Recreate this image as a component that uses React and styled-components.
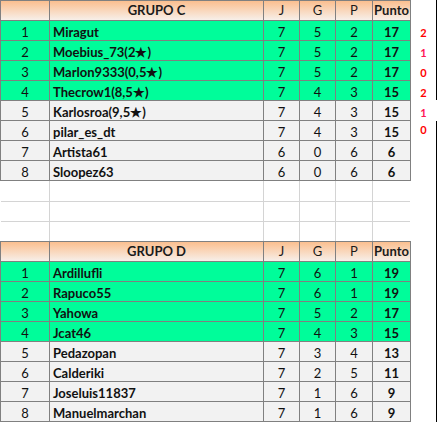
import React from 'react';
import styled, { createGlobalStyle } from 'styled-components';

const GROUPS = [
  {
    title: 'GRUPO C',
    rows: [
      ['Miragut', 7, 5, 2, 17],
      ['Moebius_73(2★)', 7, 5, 2, 17],
      ['Marlon9333(0,5★)', 7, 5, 2, 17],
      ['Thecrow1(8,5★)', 7, 4, 3, 15],
      ['Karlosroa(9,5★)', 7, 4, 3, 15],
      ['pilar_es_dt', 7, 4, 3, 15],
      ['Artista61', 6, 0, 6, 6],
      ['Sloopez63', 6, 0, 6, 6],
    ],
  },
  {
    title: 'GRUPO D',
    rows: [
      ['Ardillufli', 7, 6, 1, 19],
      ['Rapuco55', 7, 6, 1, 19],
      ['Yahowa', 7, 5, 2, 17],
      ['Jcat46', 7, 4, 3, 15],
      ['Pedazopan', 7, 3, 4, 13],
      ['Calderiki', 7, 2, 5, 11],
      ['Joseluis11837', 7, 1, 6, 9],
      ['Manuelmarchan', 7, 1, 6, 9],
    ],
  },
];

const MARKS = [2, 1, 0, 2, 1, 0];

const COLUMNS = '48px 213px 35px 35px 36px 37px';

const GlobalStyle = createGlobalStyle`
  body {
    margin: 0;
    background: #fff;
    font-family: Lato, "Liberation Sans", Arial, sans-serif;
  }
`;

const Sheet = styled.div`
  display: flex;
  align-items: flex-start;
  width: 437px;
  height: 422px;
  overflow: hidden;
`;

const Standings = styled.div`
  display: flex;
  flex-direction: column;
  width: 411px;
`;

const Board = styled.div`
  display: grid;
  grid-template-columns: ${COLUMNS};
  grid-auto-rows: 19px;
  gap: 1px;
  background: #808080;
  border: 1px solid #808080;
`;

const HeadCell = styled.div`
  display: flex;
  align-items: flex-end;
  justify-content: center;
  padding-bottom: 2px;
  background: linear-gradient(#fbbf8f, #f7efe9);
  color: #1b1b1b;
  font-size: 13px;
  line-height: 15px;
  font-weight: ${({ $bold }) => ($bold ? 700 : 400)};
`;

const Cell = styled.div`
  display: flex;
  align-items: flex-end;
  justify-content: ${({ $left }) => ($left ? 'flex-start' : 'center')};
  padding-left: ${({ $left }) => ($left ? '3px' : '0')};
  background: ${({ $top }) => ($top ? '#00fd9a' : '#f2f2f2')};
  color: #111;
  font-size: 13px;
  line-height: 15px;
  font-weight: ${({ $bold }) => ($bold ? 700 : 400)};
  white-space: nowrap;
`;

const Blank = styled.div`
  display: grid;
  grid-template-columns: ${COLUMNS};
  grid-template-rows: 20px 19px 19px;
  gap: 1px;
  margin: 0 1px;
  background: #d4d4d4;
`;

const BlankCell = styled.div`
  background: #fff;
`;

const Side = styled.div`
  display: flex;
  width: 26px;
  height: 422px;
`;

const Marks = styled.div`
  display: flex;
  flex-direction: column;
  width: 25px;
  padding-top: 23px;
`;

const Mark = styled.div`
  height: 20px;
  margin-top: ${({ $nudge }) => $nudge || 0}px;
  text-align: center;
  font-size: 11px;
  line-height: 20px;
  font-weight: 700;
  color: ${({ $value }) => ($value === 1 ? '#ff1654' : '#ff0000')};
`;

const Rule = styled.div`
  display: flex;
  flex-direction: column;
  width: 1px;
`;

const RuleLine = styled.div`
  width: 1px;
  height: ${({ $length }) => $length}px;
  margin-top: ${({ $offset }) => $offset || 0}px;
  background: #000;
`;

const GroupTable = ({ title, rows }) => (
  <Board>
    <HeadCell />
    <HeadCell $bold>{title}</HeadCell>
    <HeadCell>J</HeadCell>
    <HeadCell>G</HeadCell>
    <HeadCell>P</HeadCell>
    <HeadCell $bold>Punto</HeadCell>
    {rows.map(([name, j, g, p, pts], i) => {
      const top = i < 4;
      return (
        <React.Fragment key={name}>
          <Cell $top={top}>{i + 1}</Cell>
          <Cell $top={top} $left $bold>
            {name}
          </Cell>
          <Cell $top={top}>{j}</Cell>
          <Cell $top={top}>{g}</Cell>
          <Cell $top={top}>{p}</Cell>
          <Cell $top={top} $bold>
            {pts}
          </Cell>
        </React.Fragment>
      );
    })}
  </Board>
);

const App = () => (
  <>
    <GlobalStyle />
    <Sheet>
      <Standings>
        <GroupTable {...GROUPS[0]} />
        <Blank>
          {Array.from({ length: 18 }, (_, i) => (
            <BlankCell key={i} />
          ))}
        </Blank>
        <GroupTable {...GROUPS[1]} />
      </Standings>
      <Side>
        <Marks>
          {MARKS.map((m, i) => (
            <Mark key={i} $value={m} $nudge={i === 5 ? -3 : 0}>
              {m}
            </Mark>
          ))}
        </Marks>
        <Rule>
          <RuleLine $length={100} />
          <RuleLine $length={301} $offset={21} />
        </Rule>
      </Side>
    </Sheet>
  </>
);

export default App;
